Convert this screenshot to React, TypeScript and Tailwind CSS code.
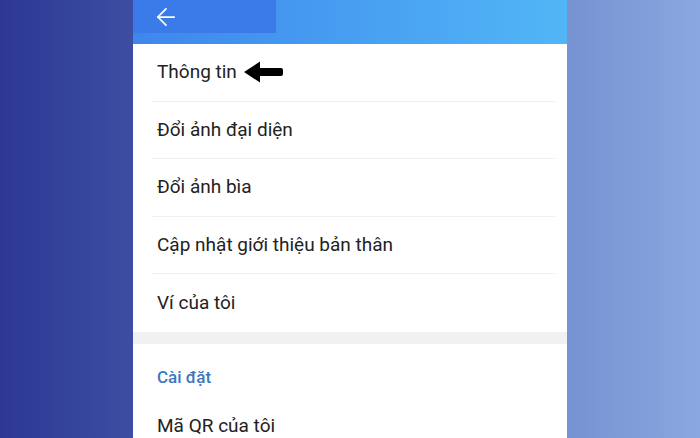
import { ArrowLeft } from 'lucide-react'

const ITEMS = ['Thông tin', 'Đổi ảnh đại diện', 'Đổi ảnh bìa', 'Cập nhật giới thiệu bản thân', 'Ví của tôi']

export default function App() {
  return (
    <div className="flex h-[438px] w-[700px] justify-center overflow-hidden bg-gradient-to-r from-[#2d3893] to-[#8ba7e0] font-['Roboto',sans-serif]">
      <div className="flex w-[434px] flex-col bg-white">
        {/* Header */}
        <div className="flex h-[44px] shrink-0 bg-gradient-to-r from-[#3f86ec] to-[#52b6f6]">
          <div className="flex h-[33px] w-[143px] items-center bg-[#3a7be9] pl-[19px]">
            <ArrowLeft className="h-[28px] w-[28px] text-white" strokeWidth={1.5} />
          </div>
        </div>

        {/* Menu */}
        <div className="pl-[19px] pr-[12px]">
          {ITEMS.map((item, i) => (
            <div
              key={item}
              className={`flex h-[57.5px] items-center pl-[5px] text-[19px] text-[#222] ${i < ITEMS.length - 1 ? 'border-b-[1.5px] border-[#f0f0f0]' : ''}`}
            >
              {item}
              {i === 0 && (
                <svg className="ml-[7px]" width="39" height="22" viewBox="0 0 39 22">
                  <path d="M0 11 L16 0.5 L16 7 L37 7 Q39 7 39 9 L39 13 Q39 15 37 15 L16 15 L16 21.5 Z" fill="#000" />
                </svg>
              )}
            </div>
          ))}
        </div>

        {/* Section gap */}
        <div className="h-[12px] shrink-0 bg-[#f1f1f4]" />

        <div className="pl-[24px] pr-[12px]">
          <div className="pt-[21px] text-[17px] font-medium text-[#3b78c0]">Cài đặt</div>
          <div className="pt-[22px] text-[19px] text-[#222]">Mã QR của tôi</div>
        </div>
      </div>
    </div>
  )
}
